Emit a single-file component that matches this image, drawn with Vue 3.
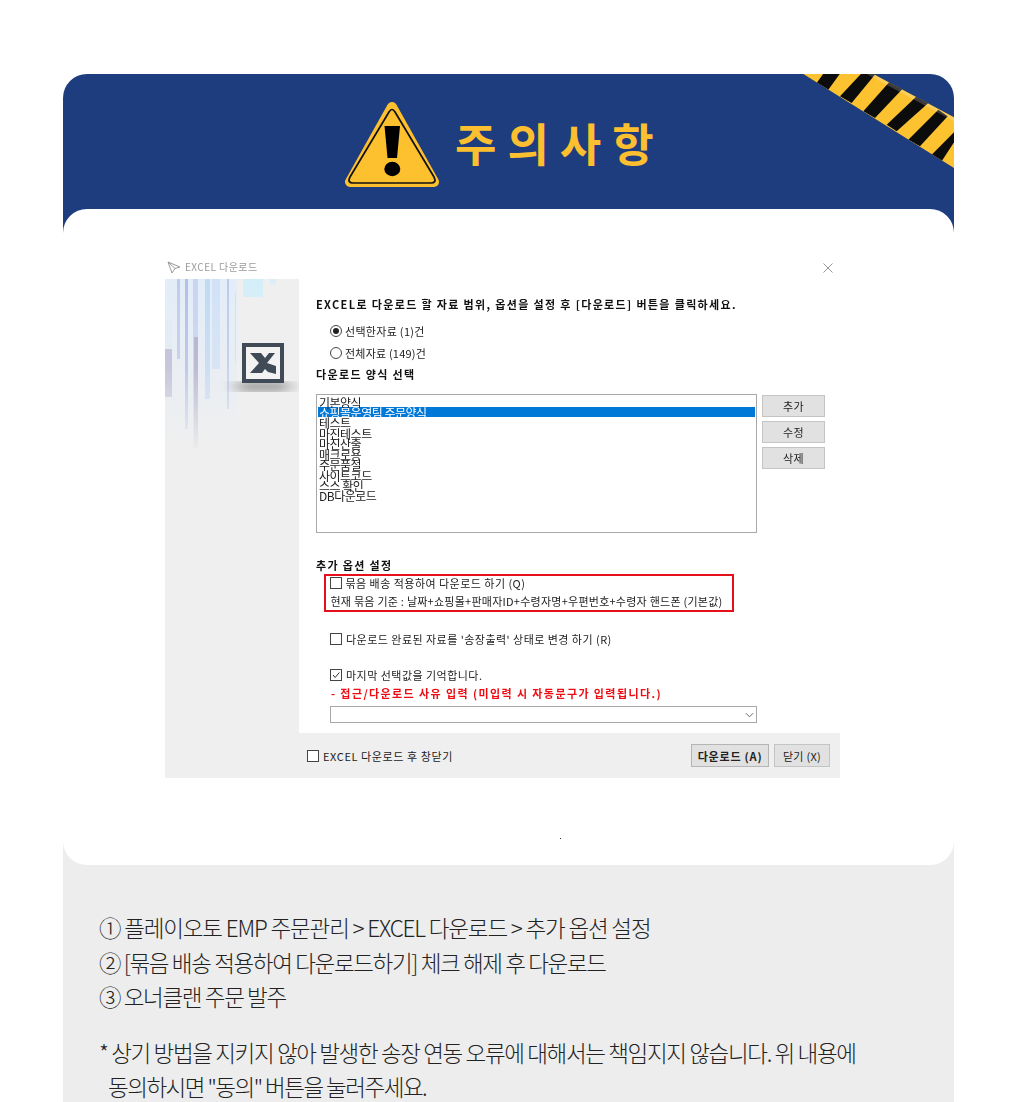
<script setup>
const templates = ['기본양식', '쇼핑몰운영팀 주문양식', '테스트', '마진테스트', '마진산출', '매크로용', '주문품절', '사이트코드', '스스 확인', 'DB다운로드']
const sideBars = [
  { x: 12, y: 0, w: 3, h: 80, c: '#b9c6ea' },
  { x: 20, y: 0, w: 3, h: 150, c: '#a9b9e6' },
  { x: 28, y: 0, w: 5, h: 170, c: '#c2d0f0' },
  { x: 29, y: 58, w: 4, h: 110, c: '#a6a4c6' },
  { x: 40, y: 0, w: 5, h: 120, c: '#bcd6f4' },
  { x: 47, y: 0, w: 8, h: 90, c: '#cfe0f6' },
  { x: 62, y: 0, w: 2, h: 130, c: '#b6c4ea' },
  { x: 70, y: 14, w: 1, h: 70, c: '#d4deee' },
  { x: 78, y: 0, w: 20, h: 18, c: '#cfeefb' },
  { x: 105, y: 0, w: 6, h: 6, c: '#d8eef8' },
  { x: 0, y: 70, w: 7, h: 48, c: '#b8b4d0' },
  { x: 0, y: 40, w: 7, h: 30, c: '#e2ecf4' },
]
</script>

<template>
  <main class="page">
    <section class="card">
      <svg class="tape" viewBox="0 18 477 300" aria-hidden="true">
        <defs>
          <clipPath id="band"><polygon points="25,18 235,18 477,148 477,300" /></clipPath>
        </defs>
        <g clip-path="url(#band)">
          <rect x="0" y="18" width="477" height="300" fill="#fdc22f" />
          <g fill="#0c0c0c">
            <polygon points="65,45 90,10 140,10 100,65" />
            <polygon points="135,85 205,10 248,10 170,105" />
            <polygon points="205,130 285,40 325,60 240,150" />
            <polygon points="275,170 365,85 400,105 305,190" />
            <polygon points="340,215 430,125 458,145 375,235" />
            <polygon points="410,260 480,190 480,218 440,280" />
          </g>
          <polygon points="235,18 477,148 477,160 215,18" fill="#fff" opacity=".2" />
        </g>
      </svg>

      <header class="head">
        <svg class="warn" viewBox="0 0 94 85" aria-hidden="true">
          <path d="M47 5 L5 80 H89 Z" fill="#fdc02e" stroke="#fdc02e" stroke-width="10" stroke-linejoin="round" />
          <path d="M44 10 Q47 5 50 10 L89 75 Q92 81 86 81 H8 Q2 81 5 75 Z" fill="none" stroke="#111" stroke-width="1.7" />
          <path d="M39.5 24 H55 L52 56 H42.5 Z" fill="#000" />
          <ellipse cx="47.3" cy="67" rx="8" ry="7.2" fill="#000" />
        </svg>
        <h1 class="title">주의사항</h1>
      </header>

      <div class="panel">
        <div class="dialog">
          <div class="dlg-title">
            <svg class="cursor" viewBox="0 0 14 13" aria-hidden="true">
              <path d="M1 1 L13 6 L8 7.5 L5 12 Z M1 1 L8 7.5" fill="none" stroke="#9a9a9a" stroke-width="1" />
            </svg>
            <span>EXCEL 다운로드</span>
            <svg class="close" viewBox="0 0 10 10" aria-hidden="true">
              <path d="M.5 .5 L9.5 9.5 M9.5 .5 L.5 9.5" stroke="#8a8a8a" stroke-width=".9" fill="none" />
            </svg>
          </div>
          <div class="dlg-body">
            <div class="side">
              <svg viewBox="0 0 134 499" width="134" height="499" aria-hidden="true">
                <defs>
                  <linearGradient id="fade" x1="0" y1="0" x2="0" y2="1">
                    <stop offset="0" stop-color="#fff" />
                    <stop offset=".5" stop-color="#ccc" />
                    <stop offset="1" stop-color="#000" />
                  </linearGradient>
                  <linearGradient id="wash" x1="0" y1="0" x2="0" y2="1">
                    <stop offset="0" stop-color="#e3edf8" />
                    <stop offset="1" stop-color="#efefef" />
                  </linearGradient>
                  <mask id="barmask"><rect width="134" height="175" fill="url(#fade)" /></mask>
                  <filter id="soft"><feGaussianBlur stdDeviation=".7" /></filter>
                  <filter id="softer"><feGaussianBlur stdDeviation="5" /></filter>
                  <linearGradient id="shadow" x1="0" y1="0" x2="1" y2="0">
                    <stop offset="0" stop-color="#777" stop-opacity="0" />
                    <stop offset=".3" stop-color="#666" stop-opacity=".7" />
                    <stop offset=".7" stop-color="#666" stop-opacity=".7" />
                    <stop offset="1" stop-color="#777" stop-opacity="0" />
                  </linearGradient>
                </defs>
                <rect x="0" y="0" width="72" height="170" fill="url(#wash)" />
                <g mask="url(#barmask)">
                  <g filter="url(#soft)" opacity=".85">
                    <rect v-for="(b, i) in sideBars" :key="i" :x="b.x" :y="b.y" :width="b.w" :height="b.h" :fill="b.c" />
                  </g>
                </g>
                <rect x="60" y="103" width="76" height="9" fill="url(#shadow)" filter="url(#softer)" />
                <rect x="79" y="66" width="38" height="36" fill="#f3f3f3" stroke="#414b58" stroke-width="4" />
                <path d="M85 74 H96 L100 79 L104 74 H110 L102 84 L111 87 V95 L103 93 L100 90 L97 94 H85 L94 84 Z" fill="#414b58" />
              </svg>
            </div>
            <div class="main">
              <div class="content">
                <p class="strong heading">EXCEL로 다운로드 할 자료 범위, 옵션을 설정 후 [다운로드] 버튼을 클릭하세요.</p>
                <label class="opt radio-one"><i class="radio on"></i>선택한자료 (1)건</label>
                <label class="opt radio-two"><i class="radio"></i>전체자료 (149)건</label>
                <p class="strong form-label">다운로드 양식 선택</p>
                <div class="list-row">
                  <ul class="list">
                    <li v-for="(t, i) in templates" :key="t" :class="{ sel: i === 1 }">{{ t }}</li>
                  </ul>
                  <div class="side-btns">
                    <button>추가</button>
                    <button>수정</button>
                    <button>삭제</button>
                  </div>
                </div>
                <p class="strong extra-label">추가 옵션 설정</p>
                <div class="redbox">
                  <label class="opt"><i class="check"></i>묶음 배송 적용하여 다운로드 하기 (Q)</label>
                  <p class="basis">현재 묶음 기준 : 날짜+쇼핑몰+판매자ID+수령자명+우편번호+수령자 핸드폰 (기본값)</p>
                </div>
                <label class="opt check-two"><i class="check"></i>다운로드 완료된 자료를 '송장출력' 상태로 변경 하기 (R)</label>
                <label class="opt check-three"><i class="check"><svg viewBox="0 0 12 12"><path d="M2.5 6 L5 9 L10 3" fill="none" stroke="#333" stroke-width="1.2" /></svg></i>마지막 선택값을 기억합니다.</label>
                <p class="strong red">- 접근/다운로드 사유 입력 (미입력 시 자동문구가 입력됩니다.)</p>
                <div class="select">
                  <svg viewBox="0 0 10 6" aria-hidden="true"><path d="M1 1 L5 5 L9 1" fill="none" stroke="#555" stroke-width="1" /></svg>
                </div>
              </div>
              <div class="foot">
                <label class="opt"><i class="check"></i>EXCEL 다운로드 후 창닫기</label>
                <div class="foot-btns">
                  <button class="primary">다운로드 (A)</button>
                  <button class="plain">닫기 (X)</button>
                </div>
              </div>
            </div>
          </div>
        </div>
        <div class="dot"></div>
      </div>

      <div class="notes">
        <p class="first">① 플레이오토 EMP 주문관리 &gt; EXCEL 다운로드 &gt; 추가 옵션 설정</p>
        <p>② [묶음 배송 적용하여 다운로드하기] 체크 해제 후 다운로드</p>
        <p>③ 오너클랜 주문 발주</p>
        <p class="warnline">* 상기 방법을 지키지 않아 발생한 송장 연동 오류에 대해서는 책임지지 않습니다. 위 내용에</p>
        <p class="indent">동의하시면 "동의" 버튼을 눌러주세요.</p>
      </div>
    </section>
  </main>
</template>

<style scoped>
.page {
  width: 1022px;
  height: 1102px;
  box-sizing: border-box;
  padding: 74px 0 0 63px;
  overflow: hidden;
  background: #fff;
  font-family: "Noto Sans CJK KR", "Noto Sans", sans-serif;
  color: #1c1c1c;
}
p, ul, h1 { margin: 0; padding: 0; }
.card {
  position: relative;
  width: 891px;
  height: 1028px;
  border-radius: 24px 24px 0 0;
  overflow: hidden;
  background: linear-gradient(#1e3d7e 0 300px, #ededed 300px);
}
.tape {
  position: absolute;
  top: 0;
  right: 0;
  width: 159px;
  height: 100px;
}
.head {
  height: 135px;
  box-sizing: border-box;
  display: flex;
  align-items: flex-start;
  padding: 28px 0 0 282px;
  gap: 16px;
}
.warn { width: 94px; height: 85px; flex: none; }
.title {
  font-size: 45px;
  line-height: 60px;
  font-weight: 700;
  letter-spacing: 11px;
  color: #fbbf2f;
  white-space: nowrap;
  margin-top: 11px;
}
.panel {
  height: 656px;
  box-sizing: border-box;
  padding: 46px 0 0 102px;
  background: #fff;
  border-radius: 24px;
}
.dialog { width: 675px; font-size: 11px; line-height: 14px; filter: blur(.3px); }
.dlg-title {
  height: 24px;
  display: flex;
  align-items: center;
  box-sizing: border-box;
  padding: 0 0 0 2px;
  color: #9c9c9c;
  font-size: 10px;
  letter-spacing: .45px;
}
.cursor { width: 14px; height: 13px; margin-right: 4px; }
.close { width: 10px; height: 10px; margin: 2px 7px 0 auto; }
.dlg-body { display: flex; height: 499px; }
.side { width: 134px; height: 499px; background: #efefef; flex: none; }
.side svg { display: block; }
.main { width: 541px; display: flex; flex-direction: column; }
.content { height: 454px; box-sizing: border-box; padding-left: 17px; overflow: hidden; }
.strong { font-weight: 700; white-space: nowrap; color: #111; letter-spacing: 1.35px; height: 14px; }
.opt { display: flex; align-items: center; height: 14px; white-space: nowrap; color: #222; letter-spacing: .47px; }
.heading { margin-top: 18px; }
.radio-one { margin: 13px 0 0 14px; letter-spacing: .3px; }
.radio-two { margin: 8px 0 0 14px; letter-spacing: .2px; }
.form-label { margin-top: 7px; }
.list-row { display: flex; gap: 5px; margin-top: 13px; }
.list {
  list-style: none;
  width: 441px;
  height: 139px;
  box-sizing: border-box;
  border: 1px solid #a8a8a8;
  padding: 1.5px 1px 0;
  background: #fff;
  font-size: 12px;
  line-height: 11.5px;
  letter-spacing: -.5px;
  color: #222;
}
.list li { padding-left: 1px; white-space: nowrap; height: 10.45px; }
.list li.sel { background: #0078d7; color: #fff; }
.side-btns { width: 63px; padding-top: 1px; display: flex; flex-direction: column; gap: 4px; }
button {
  font: inherit;
  padding: 0;
  color: #222;
  background: #e1e1e1;
  border: 1px solid #c4c4c4;
  letter-spacing: .3px;
}
.side-btns button { height: 22px; }
.extra-label { margin-top: 25px; }
.redbox {
  width: 410px;
  height: 38px;
  margin: 2px 0 0 8px;
  box-sizing: border-box;
  border: 2.5px solid #e60f1c;
  padding: 0 0 0 3.5px;
}
.basis { margin: 3.5px 0 0 1px; white-space: nowrap; color: #222; letter-spacing: .25px; }
.check-two { margin: 20px 0 0 14px; }
.check-three { margin: 22px 0 0 14px; }
.red { color: #ee0c12; margin: 4px 0 0 15px; letter-spacing: 1.4px; }
.select {
  width: 427px;
  height: 17px;
  margin: 6px 0 0 14px;
  box-sizing: border-box;
  border: 1px solid #a8a8a8;
  display: flex;
  align-items: center;
  justify-content: flex-end;
  padding-right: 2px;
}
.select svg { width: 9px; height: 6px; }
.foot {
  height: 45px;
  background: #efefef;
  display: flex;
  align-items: center;
  justify-content: space-between;
  box-sizing: border-box;
  padding: 0 10px 0 8px;
}
.foot .opt { letter-spacing: .6px; }
.foot-btns { display: flex; gap: 5px; }
.foot-btns button { height: 23px; }
.primary { width: 78px; font-weight: 700; letter-spacing: .8px; border-color: #b5b5b5; }
.plain { width: 56px; }
.radio, .check {
  display: block;
  width: 12px;
  height: 12px;
  box-sizing: border-box;
  border: 1px solid #444;
  background: #fff;
  margin-right: 4px;
  flex: none;
}
.radio { margin-right: 3px; }
.check svg { display: block; width: 10px; height: 10px; }
.radio { border-radius: 50%; position: relative; }
.radio.on::after {
  content: "";
  position: absolute;
  inset: 2px;
  border-radius: 50%;
  background: #222;
}
.dot { width: 1px; height: 1px; background: #333; margin: 60px 0 0 395px; }
.notes {
  padding: 45px 0 0 36px;
  font-size: 22.5px;
  line-height: 34.5px;
  letter-spacing: -1.35px;
  font-weight: 300;
  color: #222;
  white-space: nowrap;
}
.first { letter-spacing: -1.15px; }
.warnline { margin-top: 21px; }
.indent { padding-left: 9px; letter-spacing: -1.5px; }
</style>
